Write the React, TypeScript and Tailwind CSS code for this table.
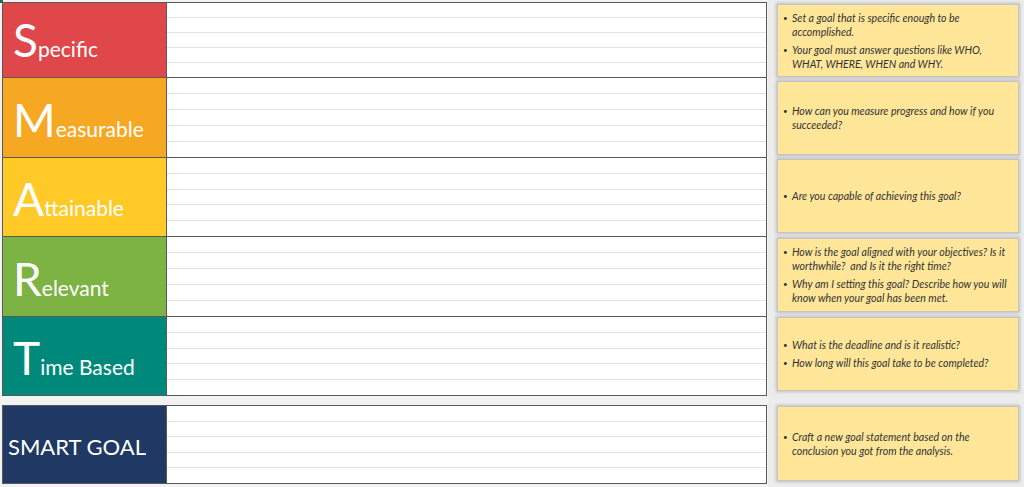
import React from 'react';

type Row = {
  first: string;
  rest: string;
  bg: string;
  h: string;
  card: string;
  notes: string[];
};

const rows: Row[] = [
  {
    first: 'S',
    rest: 'pecific',
    bg: 'bg-[#e0474a]',
    h: 'h-[75px]',
    card: 'mt-[4px] h-[73px]',
    notes: [
      'Set a goal that is specific enough to be accomplished.',
      'Your goal must answer questions like WHO, WHAT, WHERE, WHEN and WHY.',
    ],
  },
  {
    first: 'M',
    rest: 'easurable',
    bg: 'bg-[#f7a823]',
    h: 'h-[80px]',
    card: 'mt-[4px] h-[74px]',
    notes: ['How can you measure progress and how if you succeeded?'],
  },
  {
    first: 'A',
    rest: 'ttainable',
    bg: 'bg-[#ffca28]',
    h: 'h-[79px]',
    card: 'mt-[4px] h-[74px]',
    notes: ['Are you capable of achieving this goal?'],
  },
  {
    first: 'R',
    rest: 'elevant',
    bg: 'bg-[#7cb342]',
    h: 'h-[80px]',
    card: 'mt-[5px] h-[74px]',
    notes: [
      'How is the goal aligned with your objectives? Is it worthwhile?  and Is it the right time?',
      'Why am I setting this goal? Describe how you will know when your goal has been met.',
    ],
  },
  {
    first: 'T',
    rest: 'ime Based',
    bg: 'bg-[#00897b]',
    h: 'h-[79px]',
    card: 'mt-[5px] h-[74px]',
    notes: ['What is the deadline and is it realistic?', 'How long will this goal take to be completed?'],
  },
];

const Lines: React.FC = () => (
  <div className="flex flex-1 flex-col bg-white">
    {[0, 1, 2, 3, 4].map((i) => (
      <div key={i} className={i < 4 ? 'flex-1 border-b border-[#e3e3e3]' : 'flex-1'} />
    ))}
  </div>
);

const Note: React.FC<{ notes: string[]; cls: string }> = ({ notes, cls }) => (
  <div
    className={`${cls} flex flex-col justify-center gap-[4px] border border-[#c4c4c4] bg-[#ffe699] pl-[5px] pr-[10px] shadow-[0_0_3px_1px_rgba(0,0,0,0.2)]`}
  >
    {notes.map((n, i) => (
      <div key={i} className="flex text-[10.6px] leading-[14px] italic text-[#333333]">
        <span className="w-[9px] shrink-0 text-[8px] not-italic">•</span>
        <span className="whitespace-pre-wrap">{n}</span>
      </div>
    ))}
  </div>
);

const App: React.FC = () => {
  return (
    <div
      className="relative flex h-[487px] w-[1024px] overflow-hidden bg-[#f2f2f2]"
      style={{ fontFamily: 'Lato, "Open Sans", sans-serif' }}
    >
      <div className="absolute left-0 top-0 h-[3px] w-[3px] bg-[#217346]" />

      {/* table side */}
      <div className="flex w-[768px] flex-col pl-[2px] pt-[2px]">
        <div className="flex w-[765px] flex-col border-x border-t border-[#595959] bg-white">
          {rows.map((r) => (
            <div key={r.first} className={`flex ${r.h} border-b border-[#595959]`}>
              <div
                className={`flex w-[164px] shrink-0 items-end border-r border-[#595959] pb-[14px] pl-[10px] ${r.bg}`}
              >
                <div className="flex items-baseline text-white">
                  <span className="text-[46px] leading-none">{r.first}</span>
                  <span className="text-[21px] leading-none">{r.rest}</span>
                </div>
              </div>
              <Lines />
            </div>
          ))}
        </div>

        <div className="mt-[9px] flex h-[79px] w-[765px] border border-[#595959] bg-white">
          <div className="flex w-[164px] shrink-0 items-center border-r border-[#595959] bg-[#1f3864] pl-[5px] pt-[4px]">
            <span className="text-[22px] leading-none text-white">SMART GOAL</span>
          </div>
          <Lines />
        </div>
      </div>

      {/* notes side */}
      <div className="flex flex-1 flex-col bg-[#ececec] pl-[9px] pr-[5px]">
        {rows.map((r) => (
          <Note key={r.first} notes={r.notes} cls={r.card} />
        ))}
        <Note
          cls="mt-[15px] h-[75px]"
          notes={['Craft a new goal statement based on the conclusion you got from the analysis.']}
        />
      </div>
    </div>
  );
};

export default App;
